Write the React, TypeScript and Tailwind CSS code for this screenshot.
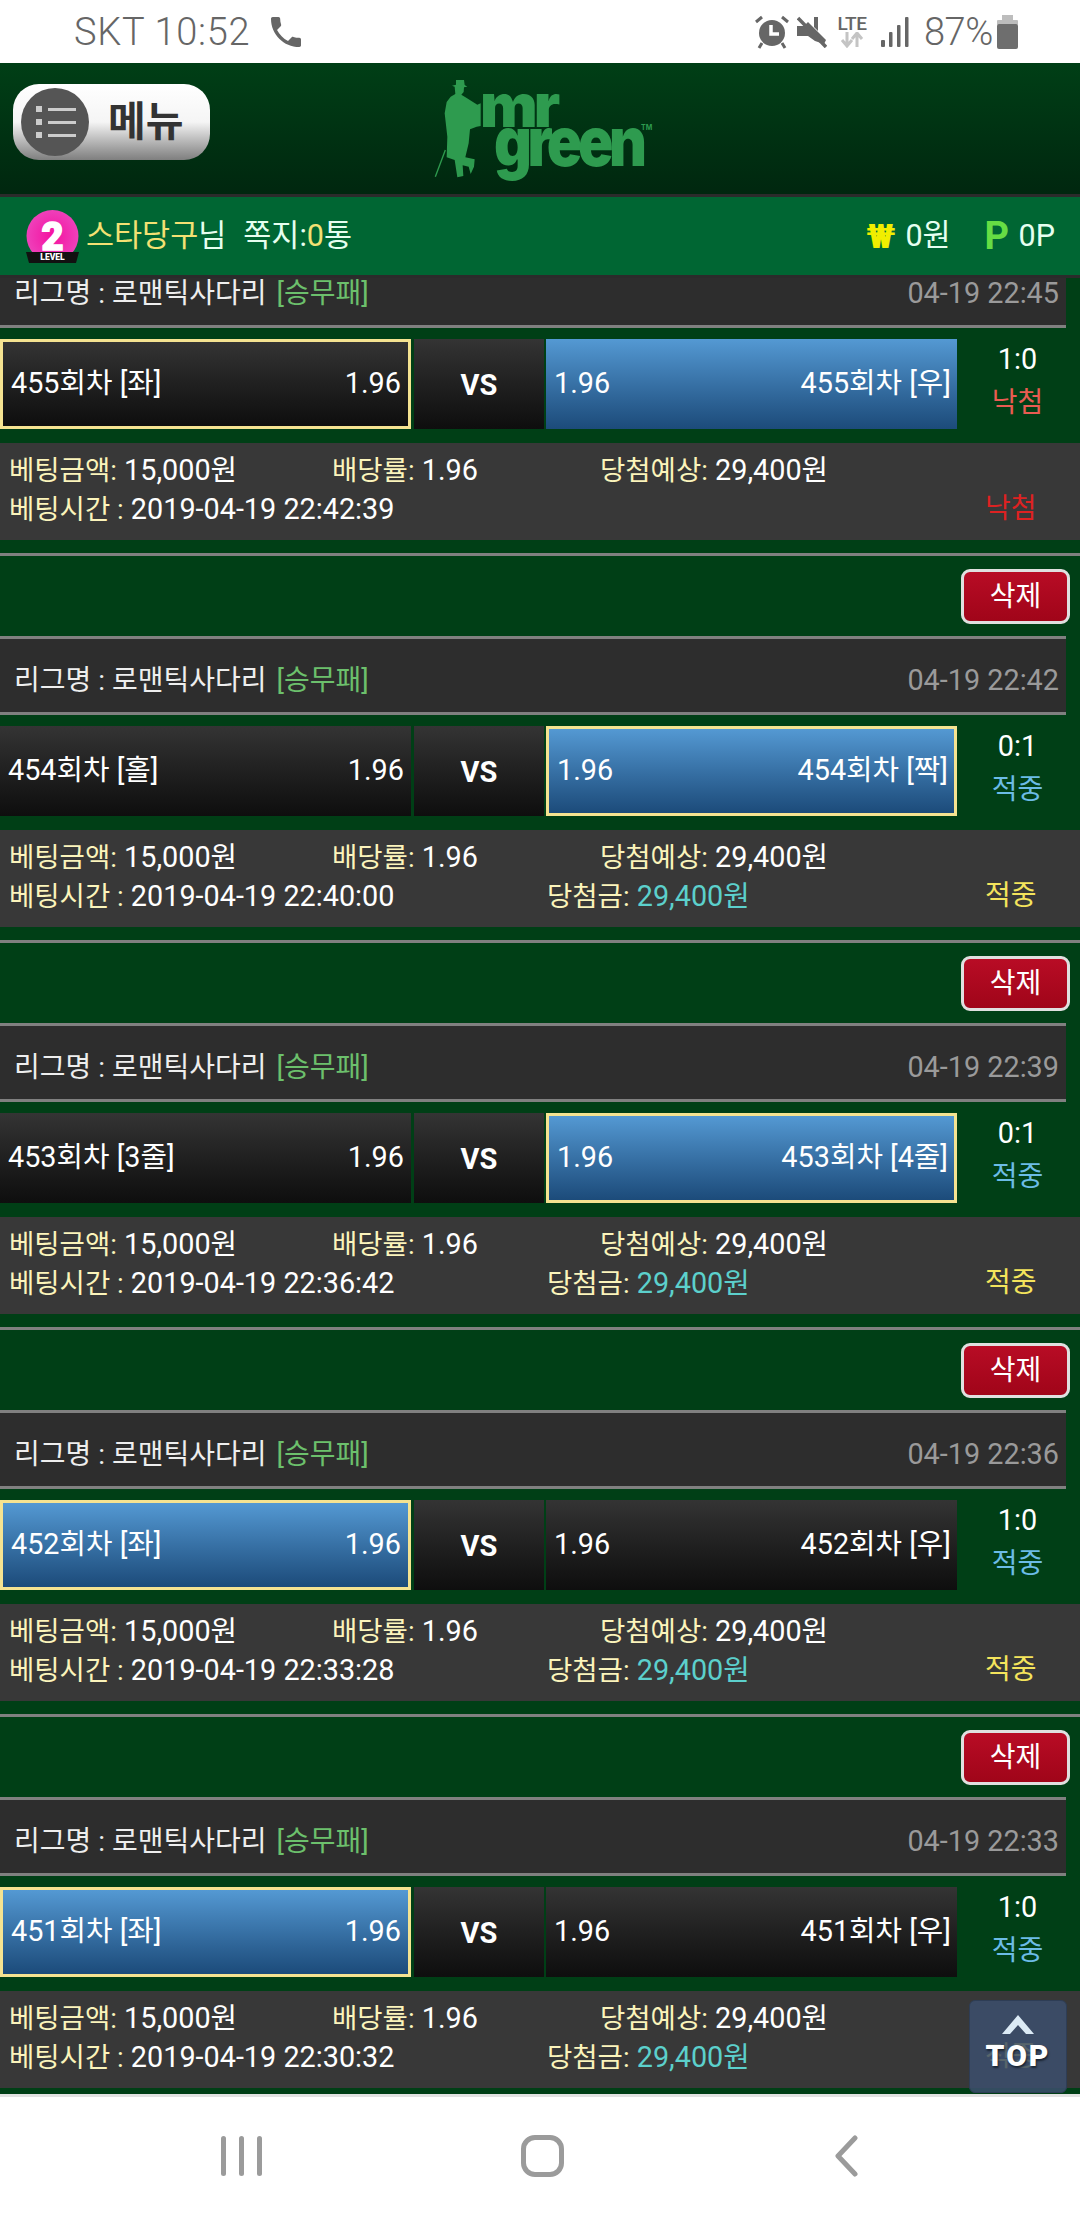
const FONT = "font-['Roboto','Noto_Sans_CJK_KR',sans-serif]";

type Bet = {
  left: string; right: string; pick: "left" | "right"; blue: "left" | "right"; score: string; date: string; time: string; win: boolean;
};

const bets: Bet[] = [
  { left: "455회차 [좌]", right: "455회차 [우]", pick: "left", blue: "right", score: "1:0", date: "04-19 22:45", time: "2019-04-19 22:42:39", win: false },
  { left: "454회차 [홀]", right: "454회차 [짝]", pick: "right", blue: "right", score: "0:1", date: "04-19 22:42", time: "2019-04-19 22:40:00", win: true },
  { left: "453회차 [3줄]", right: "453회차 [4줄]", pick: "right", blue: "right", score: "0:1", date: "04-19 22:39", time: "2019-04-19 22:36:42", win: true },
  { left: "452회차 [좌]", right: "452회차 [우]", pick: "left", blue: "left", score: "1:0", date: "04-19 22:36", time: "2019-04-19 22:33:28", win: true },
  { left: "451회차 [좌]", right: "451회차 [우]", pick: "left", blue: "left", score: "1:0", date: "04-19 22:33", time: "2019-04-19 22:30:32", win: true },
];

function StatusBar() {
  return (
    <div className="h-[63px] shrink-0 bg-white flex items-center text-[#666] relative">
      <span className="ml-[74px] w-[197px] text-[38px] font-light leading-none tracking-[0.7px] font-['Roboto',sans-serif]">SKT 10:52</span>
      <svg width="30" height="30" viewBox="3 3 18 18" className="fill-[#666]">
        <path d="M6.62 10.79c1.44 2.83 3.76 5.14 6.59 6.59l2.2-2.2c.27-.27.67-.36 1.02-.24 1.12.37 2.33.57 3.57.57.55 0 1 .45 1 1V20c0 .55-.45 1-1 1-9.39 0-17-7.61-17-17 0-.55.45-1 1-1h3.5c.55 0 1 .45 1 1 0 1.25.2 2.45.57 3.57.11.35.03.74-.25 1.02l-2.2 2.2z" />
      </svg>
      <div className="ml-auto mr-[64px] flex items-center">
        <svg width="34" height="34" viewBox="0 0 34 34" className="mr-[8px]">
          <circle cx="17" cy="18" r="13" fill="#666" />
          <path d="M16 10v9h8" stroke="#fff" strokeWidth="3.5" fill="none" />
          <path d="M1 7l6-5M33 7l-6-5M7 28l-3 5M27 28l3 5" stroke="#666" strokeWidth="3" />
        </svg>
        <svg width="30" height="32" viewBox="0 0 30 32" className="mr-[9px]">
          <path d="M0 10h7l4-4 18 18-2 4-9-3-7-5H0z M17 1h4v14l-4-4z" fill="#666" />
          <path d="M1 2l28 29" stroke="#666" strokeWidth="3.5" />
        </svg>
        <div className="w-[32px] h-[34px] mr-[13px] flex flex-col items-center">
          <span className="text-[19px] leading-[17px] font-medium tracking-[-0.5px] font-['Roboto',sans-serif]">LTE</span>
          <svg width="24" height="16" viewBox="0 0 24 16">
            <path d="M7 0v13M2 8l5 6 5-6M17 15V2M12 7l5-6 5 6" stroke="#c4c4c4" strokeWidth="3" fill="none" />
          </svg>
        </div>
        <svg width="28" height="30" viewBox="0 0 28 30" className="mr-[15px] fill-[#666]">
          <rect x="0" y="23" width="4" height="7" rx="1" />
          <rect x="8" y="15" width="3.5" height="15" rx="1" />
          <rect x="16" y="8" width="3.5" height="22" rx="1" />
          <rect x="24" y="0" width="3.5" height="30" rx="1" />
        </svg>
        <span className="w-[73px] text-[38px] leading-none font-light tracking-[-0.5px] font-['Roboto',sans-serif]">87%</span>
        <svg width="21" height="34" viewBox="0 0 21 34" className="mr-[-2px]">
          <rect x="5" y="0" width="11" height="6" fill="#bdbdbd" />
          <rect x="0" y="5" width="21" height="5" rx="1" fill="#bdbdbd" />
          <rect x="0" y="9" width="21" height="25" rx="2" fill="#6e6e6e" />
        </svg>
      </div>
    </div>
  );
}

function Logo() {
  return (
    <div className="relative w-[240px] h-[120px] ml-[210px] mt-[7px] text-[#2e9b4f]">
      <svg width="240" height="120" viewBox="0 0 720 360" className="absolute left-0 top-0">
        <path
          fill="#2e9b4f"
          d="M108 30L132 30L134 45L142 50L132 52L131 66L124 74L140 84L172 104L182 100L182 168L170 170L150 178L146 220L136 262L164 268L162 290L152 312L146 290L128 286L130 318L112 322L104 270L80 262L82 200L74 130L80 96L92 80L106 72L104 50L96 47L108 44Z"
        />
        <path d="M76 240L46 320" stroke="#2e9b4f" strokeWidth="4" />
      </svg>
      <span className="absolute left-[60px] top-[5px] text-[60px] leading-[60px] font-black tracking-[-4px] font-['Inter',sans-serif] origin-left scale-x-[1.02]">mr</span>
      <span className="absolute left-[74px] top-[37px] text-[68px] leading-[68px] font-black tracking-[-5px] font-['Inter',sans-serif] origin-left scale-x-[0.86]">green</span>
      <span className="absolute left-[221px] top-[54px] text-[7px] leading-none font-bold font-['Inter',sans-serif]">TM</span>
    </div>
  );
}

function Header() {
  return (
    <div className="h-[131px] shrink-0 bg-gradient-to-b from-[#003f16] to-[#00270f] flex items-start">
      <div className="ml-[13px] mt-[21px] w-[197px] h-[76px] rounded-[26px] bg-gradient-to-b from-white via-[#f5f5f5] to-[#7f7f7f] flex items-center pl-[8px]">
        <div className="w-[68px] h-[68px] rounded-full bg-[#555] flex flex-col justify-center gap-[7px] pl-[15px] shrink-0">
          <div className="flex items-center gap-[6px]"><span className="w-[6px] h-[6px] bg-[#ccc]" /><span className="w-[28px] h-[3px] bg-[#ccc]" /></div>
          <div className="flex items-center gap-[6px]"><span className="w-[6px] h-[6px] bg-[#ccc]" /><span className="w-[28px] h-[3px] bg-[#ccc]" /></div>
          <div className="flex items-center gap-[6px]"><span className="w-[6px] h-[6px] bg-[#ccc]" /><span className="w-[28px] h-[3px] bg-[#ccc]" /></div>
        </div>
        <span className={`ml-[19px] text-[41px] leading-none font-bold text-[#333] whitespace-nowrap ${FONT}`}>메뉴</span>
      </div>
      <Logo />
    </div>
  );
}

function InfoBar() {
  return (
    <div className={`h-[84px] shrink-0 border-y-[3px] border-[#2b2b2b] bg-[#006633] flex items-center text-[30.5px] leading-none text-[#e6fff0] ${FONT}`}>
      <svg width="53" height="53" viewBox="0 0 53 53" className="ml-[26px] mr-[7px] shrink-0">
        <defs>
          <radialGradient id="pink" cx="50%" cy="50%" r="55%">
            <stop offset="0%" stopColor="#f5109f" />
            <stop offset="100%" stopColor="#ee45bd" />
          </radialGradient>
        </defs>
        <circle cx="26.5" cy="26" r="26" fill="url(#pink)" />
        <text x="26.5" y="40" textAnchor="middle" fontSize="38" fontWeight="900" fill="#fff" stroke="#fff" strokeWidth="1.5" fontFamily="Roboto, sans-serif">2</text>
        <path d="M0 42h53l-3 11H3z" fill="#111" />
        <text x="26.5" y="50" textAnchor="middle" fontSize="8.5" fontWeight="900" fill="#fff" fontFamily="Roboto, sans-serif">LEVEL</text>
      </svg>
      <span className="text-[#f3e173]">스타당구</span>
      <span>님</span>
      <span className="ml-[17px]">쪽지:</span>
      <span className="text-[#f3e173]">0</span>
      <span>통</span>
      <span className="ml-auto w-[39px] text-[34px] font-black text-[#f1ee00] font-['Roboto',sans-serif]">₩</span>
      <span>0원</span>
      <span className="ml-[34px] w-[34px] text-[38px] font-bold text-[#66dd44] font-['Roboto',sans-serif]">P</span>
      <span className="mr-[25px]">0P</span>
    </div>
  );
}

function Picked({ bet, side }: { bet: Bet; side: "left" | "right" }) {
  const text = side === "left" ? bet.left : bet.right;
  const tone = bet.blue === side ? "bg-gradient-to-b from-[#5499d3] to-[#1c4b7a]" : "bg-gradient-to-b from-[#343434] to-[#0e0e0e]";
  const border = bet.pick === side ? "border-[3px] border-[#f5e391]" : "";
  const pad = side === "left" ? "pl-[8px] pr-[7px]" : "pl-[8px] pr-[6px]";
  return (
    <div className={`w-[411px] ${tone} ${border} ${pad} h-[90px] shrink-0 flex items-center justify-between pb-[2px] text-white`}>
      <span>{side === "left" ? text : "1.96"}</span>
      <span>{side === "left" ? "1.96" : text}</span>
    </div>
  );
}

function Card({ bet, first }: { bet: Bet; first?: boolean }) {
  return (
    <div className="shrink-0">
      {!first && (
        <div className="h-[80px] flex items-center justify-end pr-[10px] pt-[1px]">
          <div className="w-[109px] h-[55px] rounded-[9px] border-[3px] border-[#e0e0e0] bg-gradient-to-b from-[#b80c25] to-[#a00519] flex items-center justify-center text-[28px] text-white">삭제</div>
        </div>
      )}
      <div className={`w-[1066px] ${first ? "h-[50px]" : "h-[79px] border-t-[3px]"} border-b-[3px] border-[#808080] bg-[#2d2d2d] flex flex-col justify-end overflow-hidden`}>
        <div className="h-[73px] shrink-0 pt-[10px] flex items-center px-[14px]">
          <span className="text-[28px] text-[#eeeeee] whitespace-pre">리그명 : 로맨틱사다리</span>
          <span className="ml-[10px] text-[28px] text-[#6cc06c]">[승무패]</span>
          <span className="ml-auto mr-[-7px] text-[#9a9a9a]">{bet.date}</span>
        </div>
      </div>
      <div className="mt-[11px] flex h-[90px]">
        <Picked bet={bet} side="left" />
        <div className="ml-[3px] w-[130px] shrink-0 bg-gradient-to-b from-[#343434] to-[#0e0e0e] flex items-center justify-center text-white font-bold text-[29px] pt-[2px] font-['Roboto',sans-serif]">VS</div>
        <div className="w-[2px] shrink-0" />
        <Picked bet={bet} side="right" />
        <div className="flex-1 flex flex-col items-center justify-center pb-[6px] pr-[2px] leading-[44px]">
          <span className="text-white">{bet.score}</span>
          <span className={`text-[28px] ${bet.win ? "text-[#6cbce6]" : "text-[#e85c52]"}`}>{bet.win ? "적중" : "낙첨"}</span>
        </div>
      </div>
      <div className="mt-[14px] h-[97px] bg-[#383838] pt-[8px] leading-[38px] text-white">
        <div className="flex pl-[9px] h-[38px]">
          <span className="w-[323px] shrink-0"><span className="text-[27.5px] text-[#fbf4bb]">베팅금액:</span> 15,000원</span>
          <span className="w-[268px] shrink-0"><span className="text-[27.5px] text-[#fbf4bb]">배당률:</span> 1.96</span>
          <span><span className="text-[27.5px] text-[#fbf4bb]">당첨예상:</span> 29,400원</span>
        </div>
        <div className="flex pl-[9px] h-[38px] pt-[1px]">
          <span className="w-[538px] shrink-0"><span className="text-[27.5px] text-[#fbf4bb]">베팅시간 :</span> {bet.time}</span>
          <span className="w-[438px] shrink-0">
            {bet.win && <><span className="text-[27.5px] text-[#fbf4bb]">당첨금:</span> <span className="text-[#5cd0cc]">29,400원</span></>}
          </span>
          <span className={`text-[28px] ${bet.win ? "text-[#f4e45c]" : "text-[#dd2222]"}`}>{bet.win ? "적중" : "낙첨"}</span>
        </div>
      </div>
      <div className="mt-[13px] h-[3px] bg-[#808080]" />
    </div>
  );
}

function NavBar() {
  return (
    <div className="h-[126px] shrink-0 border-t-[3px] border-[#e2e2e2] bg-white flex items-center pb-[6px]">
      <div className="ml-[221px] flex gap-[13px]">
        <span className="w-[5px] h-[40px] rounded-full bg-[#9b9b9b]" />
        <span className="w-[5px] h-[40px] rounded-full bg-[#9b9b9b]" />
        <span className="w-[5px] h-[40px] rounded-full bg-[#9b9b9b]" />
      </div>
      <div className="ml-[259px] w-[43px] h-[42px] rounded-[14px] border-[5px] border-[#9b9b9b]" />
      <svg width="24" height="42" viewBox="0 0 24 42" className="ml-[270px]">
        <path d="M21 3L4 21l17 18" stroke="#9b9b9b" strokeWidth="5" strokeLinecap="round" strokeLinejoin="round" fill="none" />
      </svg>
    </div>
  );
}

export default function App() {
  return (
    <div className={`relative w-[1080px] h-[2220px] overflow-hidden flex flex-col bg-[#003f16] ${FONT} text-[28.8px] leading-none`}>
      <StatusBar />
      <Header />
      <InfoBar />
      <div className="flex-1 min-h-0 overflow-hidden flex flex-col bg-[#003f16]">
        {bets.map((b, i) => (
          <Card key={b.date} bet={b} first={i === 0} />
        ))}
      </div>
      <NavBar />
      <div className="absolute right-[13px] bottom-[127px] w-[98px] h-[93px] rounded-[6px] bg-[#3c4f6d]/85 border border-[#2e3d55] flex flex-col items-center pt-[14px]">
        <svg width="32" height="20" viewBox="0 0 32 20">
          <path d="M0 19L16 0l16 19h-8L16 10l-8 9z" fill="#dbeaf5" />
        </svg>
        <span className="mt-[7px] text-[30px] leading-[28px] font-black tracking-[2px] text-white [text-shadow:1px_2px_2px_#1a2433] font-['Roboto',sans-serif]">TOP</span>
      </div>
    </div>
  );
}
